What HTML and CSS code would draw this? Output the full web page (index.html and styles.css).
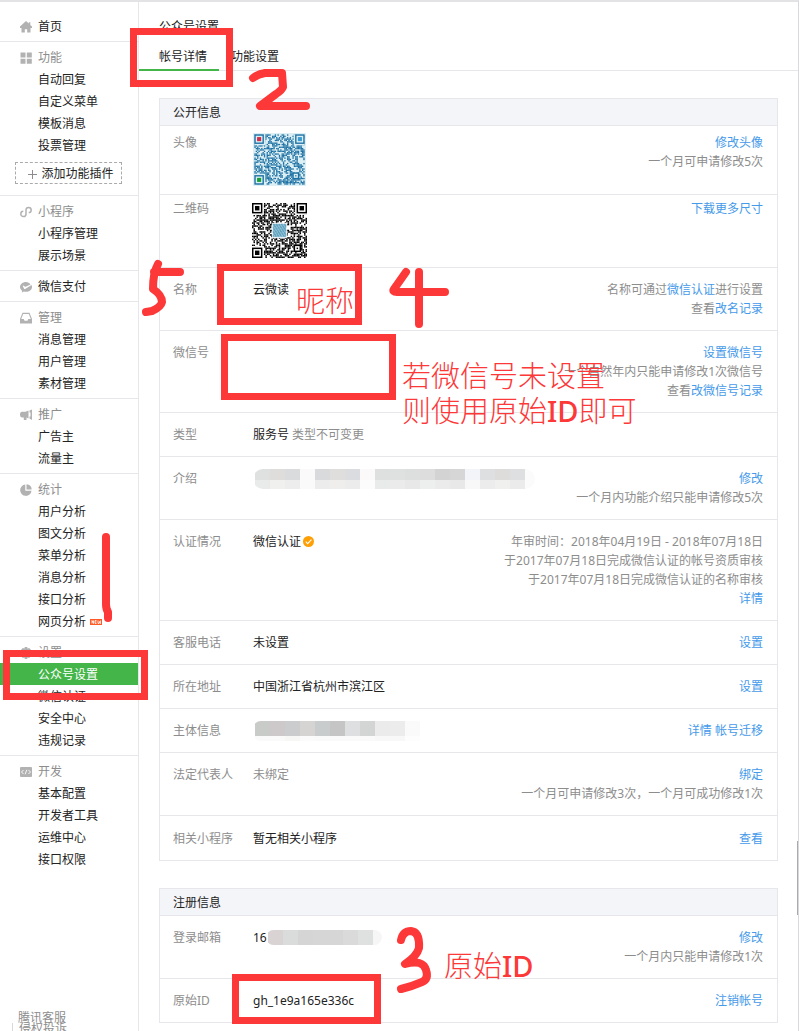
FILE: index.html
```html
<!DOCTYPE html>
<html lang="zh-CN">
<head>
<meta charset="utf-8">
<title>公众号设置</title>
<link rel="stylesheet" href="styles.css">
</head>
<body>
<div class="page">
  <aside class="sidebar">
    <nav>
      <section class="group group-home">
        <h2 class="group-title strong"><svg class="icon" viewBox="0 0 12 12"><path d="M6 0 0 5.6V7h1.500v4.500h3.300V8.200h2.400v3.300h3.300V7H12V5.600L10.300 4V1.200H8.800V2.600z"/></svg><a href="#">首页</a></h2>
      </section>
      <section class="group group-plugins">
        <h2 class="group-title"><svg class="icon" viewBox="0 0 12 12"><path d="M.5.5h5v5h-5zM6.800.5h5v5h-5zM.5 6.800h5v5h-5zM6.800 6.800h5v5h-5z"/></svg>功能</h2>
        <a class="item" href="#">自动回复</a>
        <a class="item" href="#">自定义菜单</a>
        <a class="item" href="#">模板消息</a>
        <a class="item" href="#">投票管理</a>
        <button class="add-plugin" type="button"><svg class="plus" viewBox="0 0 9 9"><path d="M4.500 0v9M0 4.500h9"/></svg>添加功能插件</button>
      </section>
      <section class="group">
        <h2 class="group-title"><svg class="icon line" viewBox="0 0 12 12"><path d="M3.300 5.300C1.600 5.300.8 6.500.8 8a2.600 2.600 0 0 0 5.200 0V4a2.600 2.600 0 0 1 5.200 0c0 1.500-.8 2.600-2.500 2.600"/></svg>小程序</h2>
        <a class="item" href="#">小程序管理</a>
        <a class="item" href="#">展示场景</a>
      </section>
      <section class="group">
        <h2 class="group-title strong"><svg class="icon" viewBox="0 0 12 12"><path d="M6 1C2.700 1 0 3.200 0 6c0 1.500.8 2.900 2.100 3.800L1.900 11.500l2-1c.7.200 1.400.3 2.100.3 3.300 0 6-2.200 6-4.900 0-.7-.2-1.300-.4-1.900L5.100 8.100c-.4.200-.8.1-1-.3L2.800 5c-.1-.4.200-.6.500-.4l1.400 1 .9.100 5-2.300C9.600 1.900 7.900 1 6 1z"/></svg><a href="#">微信支付</a></h2>
      </section>
      <section class="group">
        <h2 class="group-title"><svg class="icon" viewBox="0 0 12 12"><path fill-rule="evenodd" d="M2.500.8h7L12 7v4.500H0V7zM3.200 1.900 1.200 7h2.500l.8 1.800h3L8.300 7h2.500l-2-5.100z"/></svg>管理</h2>
        <a class="item" href="#">消息管理</a>
        <a class="item" href="#">用户管理</a>
        <a class="item" href="#">素材管理</a>
      </section>
      <section class="group">
        <h2 class="group-title"><svg class="icon" viewBox="0 0 12 12"><path d="M8.500 1.500v8L6.500 8.500V11H3.800V8.500H2C.8 8.500 0 7.200 0 5.500S.8 2.800 2 2.800h3.500zM9.500 1.500 12 .5v10.500L9.500 9.500V7.500h1v-4h-1z"/></svg>推广</h2>
        <a class="item" href="#">广告主</a>
        <a class="item" href="#">流量主</a>
      </section>
      <section class="group">
        <h2 class="group-title"><svg class="icon" viewBox="0 0 12 12"><path d="M5.300.5v6.200h6.200A5.700 5.700 0 1 1 5.300.5zM6.500.3a5.500 5.500 0 0 1 5.200 5.200H6.500z"/></svg>统计</h2>
        <a class="item" href="#">用户分析</a>
        <a class="item" href="#">图文分析</a>
        <a class="item" href="#">菜单分析</a>
        <a class="item" href="#">消息分析</a>
        <a class="item" href="#">接口分析</a>
        <a class="item" href="#">网页分析<svg class="new" viewBox="0 0 12 6"><path d="M0 0h12v6H0z" fill="#ff5a26"/><path d="M2 4.500v-3l1.500 3v-3M6.500 1.500H5v3h1.500M5 3h1.500M8 1.500v3h1l.5-2 .5 2h.5v-3" fill="none" stroke="#fff" stroke-width=".8"/></svg></a>
      </section>
      <section class="group">
        <h2 class="group-title"><svg class="icon" viewBox="0 0 12 12"><path fill-rule="evenodd" d="M4.800 0h2.400l.4 1.600 1.600-.5 1.700 1.700-.5 1.600 1.600.4v2.400l-1.600.4.5 1.600-1.700 1.700-1.600-.5-.4 1.600H4.800l-.4-1.600-1.600.5-1.700-1.700.5-1.600L0 7.200V4.800l1.600-.4-.5-1.600 1.700-1.700 1.600.5zM6 4a2 2 0 1 0 0 4 2 2 0 0 0 0-4z"/></svg>设置</h2>
        <a class="item active" href="#" aria-current="page">公众号设置</a>
        <a class="item" href="#">微信认证</a>
        <a class="item" href="#">安全中心</a>
        <a class="item" href="#">违规记录</a>
      </section>
      <section class="group">
        <h2 class="group-title"><svg class="icon" viewBox="0 0 12 12"><rect y="1" width="12" height="10" rx="1"/><path d="M3.500 4 1.500 6l2 2M8.500 4l2 2-2 2M6.800 3.800 5.200 8.200" fill="none" stroke="#fff" stroke-width=".9"/></svg>开发</h2>
        <a class="item" href="#">基本配置</a>
        <a class="item" href="#">开发者工具</a>
        <a class="item" href="#">运维中心</a>
        <a class="item" href="#">接口权限</a>
      </section>
    </nav>
    <footer class="support">
      <a href="#">腾讯客服</a>
      <a class="divided" href="#">侵权投诉</a>
    </footer>
  </aside>

  <main class="main">
    <h1 class="title">公众号设置</h1>
    <nav class="tabs">
      <a class="tab selected" href="#">帐号详情</a>
      <a class="tab" href="#">功能设置</a>
    </nav>

    <section class="panel">
      <h2 class="panel-head">公开信息</h2>
      <div class="row row-avatar">
        <div class="label">头像</div>
        <div class="value"><svg class="avatar" id="avatar" viewBox="-1 -1 39 39" role="img" aria-label="头像"></svg></div>
        <div class="note"><a href="#">修改头像</a><br>一个月可申请修改5次</div>
      </div>
      <div class="row row-code">
        <div class="label">二维码</div>
        <div class="value"><svg class="qrcode" id="qrcode" viewBox="0 0 37 37" role="img" aria-label="二维码"></svg></div>
        <div class="note"><a href="#">下载更多尺寸</a></div>
      </div>
      <div class="row">
        <div class="label">名称</div>
        <div class="value">云微读</div>
        <div class="note">名称可通过<a href="#">微信认证</a>进行设置<br>查看<a href="#">改名记录</a></div>
      </div>
      <div class="row">
        <div class="label">微信号</div>
        <div class="value"></div>
        <div class="note"><a href="#">设置微信号</a><br>一个自然年内只能申请修改1次微信号<br>查看<a href="#">改微信号记录</a></div>
      </div>
      <div class="row">
        <div class="label">类型</div>
        <div class="value">服务号 <span class="muted">类型不可变更</span></div>
      </div>
      <div class="row">
        <div class="label">介绍</div>
        <div class="value"><svg class="mosaic mosaic-intro" id="mosaic-intro" viewBox="0 0 282 20"></svg></div>
        <div class="note"><a href="#">修改</a><br>一个月内功能介绍只能申请修改5次</div>
      </div>
      <div class="row">
        <div class="label">认证情况</div>
        <div class="value">微信认证<svg class="verified" viewBox="0 0 11 11"><circle cx="5.500" cy="5.500" r="5.500" fill="#ff9f06"/><path d="m2.700 5.600 2 2 3.700-3.900" fill="none" stroke="#fff" stroke-width="1.100"/></svg></div>
        <div class="note">年审时间：2018年04月19日 - 2018年07月18日<br>于2017年07月18日完成微信认证的帐号资质审核<br>于2017年07月18日完成微信认证的名称审核<br><a href="#">详情</a></div>
      </div>
      <div class="row">
        <div class="label">客服电话</div>
        <div class="value">未设置</div>
        <div class="note"><a href="#">设置</a></div>
      </div>
      <div class="row">
        <div class="label">所在地址</div>
        <div class="value">中国浙江省杭州市滨江区</div>
        <div class="note"><a href="#">设置</a></div>
      </div>
      <div class="row">
        <div class="label">主体信息</div>
        <div class="value"><svg class="mosaic mosaic-owner" id="mosaic-owner" viewBox="0 0 167 20"></svg></div>
        <div class="note"><a href="#">详情</a> <a href="#">帐号迁移</a></div>
      </div>
      <div class="row">
        <div class="label">法定代表人</div>
        <div class="value muted">未绑定</div>
        <div class="note"><a href="#">绑定</a><br>一个月可申请修改3次，一个月可成功修改1次</div>
      </div>
      <div class="row row-related">
        <div class="label">相关小程序</div>
        <div class="value">暂无相关小程序</div>
        <div class="note"><a href="#">查看</a></div>
      </div>
    </section>

    <section class="panel">
      <h2 class="panel-head">注册信息</h2>
      <div class="row">
        <div class="label">登录邮箱</div>
        <div class="value">16<svg class="mosaic mosaic-mail" id="mosaic-mail" viewBox="0 0 116 15"></svg></div>
        <div class="note"><a href="#">修改</a><br>一个月内只能申请修改1次</div>
      </div>
      <div class="row">
        <div class="label">原始ID</div>
        <div class="value">gh_1e9a165e336c</div>
        <div class="note"><a href="#">注销帐号</a></div>
      </div>
    </section>
  </main>

  <div class="scroll-thumb"></div>

  <div class="marks">
    <svg class="strokes" width="799" height="1031" viewBox="0 0 799 1031">
      <g stroke-width="7">
        <path d="M133.500 31.500h96v52h-96z"/>
        <path d="M6.500 653.500h138v43h-138z"/>
        <path d="M220.500 267.500h138v54h-138z"/>
        <path d="M224.500 337.500h168v59h-168z"/>
        <path d="M235.500 977.500h142v43h-142z"/>
      </g>
      <g stroke-width="8" stroke-linecap="round" stroke-linejoin="round">
        <path d="M106 537V604Q106 609 108 612V618"/>
        <path d="M253 78Q258 74 265 73L282 73 283 87Q282 90 276 94L260 106H306"/>
        <path d="M158 264Q153 273 153 289 162 295 162 302 161 307 152 311L146 312M154 272H180"/>
        <path d="M406 272 394 289Q392 292 397 292H445M419 272V324"/>
        <path d="M401 940Q403 931 411 931 420 932 419 948 417 956 405 964 423 959 426 970 429 979 422 982 413 986 401 989"/>
      </g>
    </svg>
    <p class="mark-text mark-name">昵称</p>
    <p class="mark-text mark-hint">若微信号未设置<br>则使用原始<b>ID</b>即可</p>
    <p class="mark-text mark-id">原始<b>ID</b></p>
  </div>
</div>
<script src="script.js"></script>
</body>
</html>
```
FILE: styles.css
```css
* {
  box-sizing: border-box;
}

body {
  margin: 0;
  background: #fff;
  color: #222;
  font: 12px/19px "Noto Sans", "Noto Sans CJK SC", sans-serif;
}

h1,
h2,
p {
  margin: 0;
  font-size: inherit;
  font-weight: 400;
}

a {
  color: inherit;
  text-decoration: none;
}

.page {
  position: relative;
  display: flex;
  height: 100vh;
  min-height: 1031px;
  overflow: hidden;
  border-top: 2px solid #e3e3e6;
  border-right: 1px solid #d9d9dc;
}

.sidebar {
  display: flex;
  flex: 0 0 139px;
  flex-direction: column;
  justify-content: space-between;
  border-right: 1px solid #e7e7eb;
  line-height: 22px;
}

.group {
  padding: 4px 0;
  border-top: 1px solid #e7e7eb;
}

.group-home {
  padding-top: 13px;
  border-top: 0;
}

.group-title {
  display: flex;
  align-items: center;
  gap: 6px;
  height: 22px;
  padding-left: 20px;
  color: #8d8d8d;
  line-height: 24px;
}

.strong {
  color: #222;
}

.icon {
  width: 12px;
  height: 12px;
  fill: #b2b2b2;
}

.icon.line {
  fill: none;
  stroke: #b2b2b2;
  stroke-width: 1.5;
}

.item {
  display: flex;
  align-items: center;
  gap: 4px;
  height: 22px;
  padding-top: 2px;
  padding-left: 38px;
}

.item.active {
  background: #44b549;
  color: #fff;
}

.new {
  width: 12px;
  height: 6px;
}

.add-plugin {
  display: flex;
  align-items: center;
  justify-content: center;
  gap: 4px;
  width: 107px;
  height: 22px;
  margin: 6px 0 7px 15px;
  padding: 2px 0 0 5px;
  border: 1px dashed #aaa;
  background: #fff;
  color: #222;
  font: inherit;
}

.plus {
  width: 9px;
  height: 9px;
  fill: none;
  stroke: #8d8d8d;
}

.group-title {
  padding-top: 2px;
}

.support {
  display: flex;
  flex-direction: column;
  align-items: flex-start;
  height: 19px;
  padding-left: 12px;
  color: #8d8d8d;
  line-height: 11px;
}

.support a {
  padding-left: 6px;
}

.support .divided {
  border-left: 1px solid #d9d9dc;
}

.main {
  flex: 1;
  min-width: 0;
}

.title {
  padding: 16px 20px 0;
  line-height: 18px;
}

.tabs {
  display: flex;
  gap: 12px;
  height: 35px;
  border-bottom: 1px solid #e7e7eb;
}

.tab {
  height: 35px;
  padding-top: 11px;
}

.tab.selected {
  padding-right: 12px;
  padding-left: 20px;
  border-bottom: 2px solid #44b549;
}

.panel {
  margin: 27px 20px;
  border: 1px solid #e7e7eb;
}

.panel-head {
  padding: 4px 13px 3px;
  background: #f4f5f9;
}

.row {
  display: flex;
  padding: 12px 14px 12px 13px;
  border-top: 1px solid #e7e7eb;
}

.row-avatar {
  padding-top: 7px;
  padding-bottom: 8px;
}

.row-code {
  padding-top: 4px;
  padding-bottom: 9px;
}

.row-related {
  padding-top: 13px;
}

.label {
  flex: 0 0 80px;
  color: #8d8d8d;
}

.value {
  display: flex;
  flex: 1;
  align-items: center;
  align-self: flex-start;
  gap: 3px;
  min-height: 19px;
  white-space: nowrap;
}

.muted,
.note {
  color: #8d8d8d;
}

.note {
  flex: none;
  text-align: right;
}

.note a {
  color: #459ae9;
}

.avatar {
  width: 53px;
  height: 53px;
  background: #dceff4;
}

.qrcode {
  width: 55px;
  height: 55px;
  margin-top: 4px;
  margin-left: -1px;
}

.verified {
  width: 11px;
  height: 11px;
  margin-left: -1px;
}

.mosaic {
  height: 20px;
}

.mosaic-intro {
  width: 282px;
  margin-bottom: -1px;
  border-radius: 10px;
}

.mosaic-owner {
  width: 167px;
  margin-bottom: -1px;
  border-radius: 8px 0 0 8px;
}

.mosaic-mail {
  width: 116px;
  height: 15px;
  margin-left: -4px;
  border-radius: 8px;
}

.scroll-thumb {
  position: absolute;
  top: 839px;
  right: -1px;
  width: 2px;
  height: 74px;
  background: #aaa;
}

.marks {
  position: absolute;
  top: -2px;
  left: 0;
  color: #fc3838;
  pointer-events: none;
}

.strokes {
  display: block;
  fill: none;
  stroke: #fc3838;
}

.mark-text {
  position: absolute;
  font-size: 29px;
  font-weight: 300;
  line-height: 35px;
  white-space: nowrap;
}

.mark-text b {
  font-weight: 500;
}

.mark-name {
  top: 283px;
  left: 296px;
}

.mark-hint {
  top: 358px;
  left: 402px;
}

.mark-id {
  top: 948px;
  left: 444px;
}
```
FILE: script.js
```js
const NS = "http://www.w3.org/2000/svg";
const SIZE = 37;

function rect(svg, x, y, w, h, fill) {
  const r = document.createElementNS(NS, "rect");
  r.setAttribute("x", x);
  r.setAttribute("y", y);
  r.setAttribute("width", w);
  r.setAttribute("height", h);
  r.setAttribute("fill", fill);
  svg.appendChild(r);
}

function square(svg, x, y, n, dark, light, core) {
  rect(svg, x, y, n, n, dark);
  rect(svg, x + 1, y + 1, n - 2, n - 2, light);
  rect(svg, x + 2, y + 2, n - 4, n - 4, core);
}

function drawCode(id, seed, dark, light, cores) {
  const svg = document.getElementById(id);
  let s = seed;
  for (let y = 0; y < SIZE; y++) {
    for (let x = 0; x < SIZE; x++) {
      s = (s * 1103515245 + 12345) % 2147483648;
      if ((s >> 12) % 100 < 54) rect(svg, x, y, 1, 1, dark);
    }
  }
  const far = SIZE - 7;
  [[0, 0], [far, 0], [0, far]].forEach(([x, y], i) => {
    rect(svg, x ? x - 1 : 0, y ? y - 1 : 0, 8, 8, light);
    square(svg, x, y, 7, dark, light, cores[i]);
  });
  square(svg, 28, 28, 5, dark, light, dark);
  return svg;
}

drawCode("avatar", 71, "#1c70a3", "#dceff4", ["#d52b45", "#3c9bd0", "#18a038"]);

const code = drawCode("qrcode", 2017, "#000", "#fff", ["#000", "#000", "#000"]);
rect(code, 13.5, 13.5, 10, 10, "#fff");
rect(code, 14, 14, 9, 9, "#8fc1d4");
for (let i = 0; i < 120; i++) {
  rect(code, 14 + (i * 7 % 18) / 2, 14 + (i * 11 % 17) / 2, 0.5, 0.5, "#4a90b4");
}

function drawMosaic(id, split, height, top, bottom) {
  const svg = document.getElementById(id);
  top.forEach((c, i) => rect(svg, 2 + i * 15, 0, 15, split, c));
  bottom.forEach((c, i) => rect(svg, 2 + i * 15, split, 15, height - split, c));
}

drawMosaic("mosaic-intro", 11, 20,
  ["#dfe1e0", "#dfdddc", "#dadbdd", "#fafafa", "#d9dadb", "#dfdedd", "#dbdcdf", "#fbf9f9", "#dde0df",
   "#dfe1e0", "#dddede", "#dddddd", "#d3d3d4", "#d6d6d6", "#f3f4fa", "#dedfe0", "#dddcdb", "#dedfe0", "#fbfbfb"],
  ["#e9ebea", "#f0f0ee", "#ededee", "#fafafa", "#ececed", "#efeeec", "#ececed", "#fcfcfc", "#e9ebea",
   "#eaebea", "#e8e8e8", "#edefee", "#ebebeb", "#e8e8e8", "#f8f8f8", "#ececec", "#f0f0ee", "#ebebeb", "#fbfbfb"]);
drawMosaic("mosaic-owner", 15, 20,
  ["#c9cbc8", "#cdc8ca", "#cbccce", "#d5d4d2", "#c9cccc", "#c5c5c5", "#dedfe1", "#d3d4d4", "#ebebeb", "#ececec", "#fafafa"],
  ["#fafafa", "#fafafa", "#f7f7f5", "#fbfbfb", "#fafafa", "#fafafa", "#fafafa", "#fafafa", "#f8f8f8", "#f8f8f8", "#fdfdfd"]);
drawMosaic("mosaic-mail", 15, 15,
  ["#d9d3d3", "#dadcdb", "#d5d5d6", "#d6d6d6", "#d6d6d6", "#dadadb", "#dfe1e0", "#f5f6f5"], []);
```
